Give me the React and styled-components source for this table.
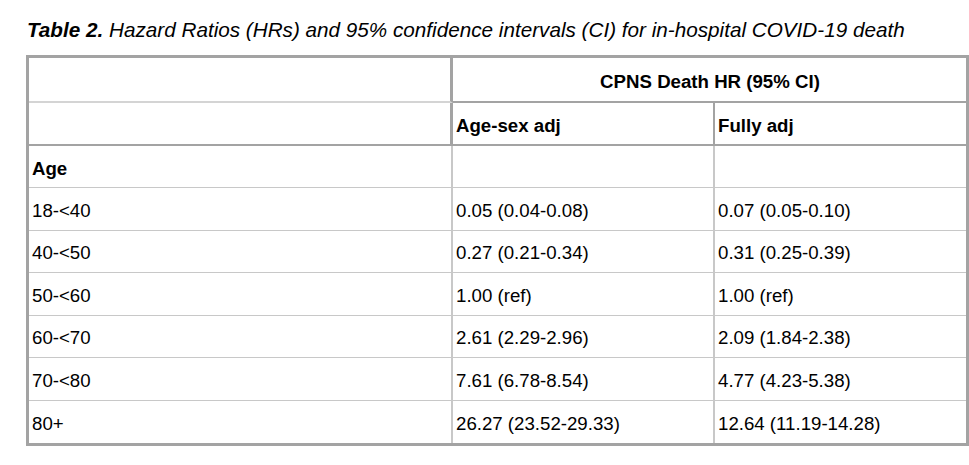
import React from 'react';
import styled, { createGlobalStyle } from 'styled-components';

const GlobalStyle = createGlobalStyle`
    html, body {
        margin: 0;
        padding: 0;
        background: #fff;
    }
    body {
        font-family: 'Liberation Sans', Arial, sans-serif;
        color: #000;
    }
`;

const rows = [
    ['18-<40', '0.05 (0.04-0.08)', '0.07 (0.05-0.10)'],
    ['40-<50', '0.27 (0.21-0.34)', '0.31 (0.25-0.39)'],
    ['50-<60', '1.00 (ref)', '1.00 (ref)'],
    ['60-<70', '2.61 (2.29-2.96)', '2.09 (1.84-2.38)'],
    ['70-<80', '7.61 (6.78-8.54)', '4.77 (4.23-5.38)'],
    ['80+', '26.27 (23.52-29.33)', '12.64 (11.19-14.28)'],
];

export default function App() {
    return (
        <Page>
            <GlobalStyle />
            <Caption>
                <b>Table 2.</b> Hazard Ratios (HRs) and 95% confidence intervals (CI) for in-hospital COVID-19 death
            </Caption>
            <Table>
                <colgroup>
                    <col style={{ width: 424 }} />
                    <col style={{ width: 262 }} />
                    <col style={{ width: 251 }} />
                </colgroup>
                <thead>
                    <tr>
                        <HeadCell $h={45} $right="3px solid #a3a3a3" $bottom="2px solid #d4d4d4" />
                        <HeadCell colSpan={2} $h={45} $center $bottom="2px solid #a3a3a3">
                            CPNS Death HR (95% CI)
                        </HeadCell>
                    </tr>
                    <tr>
                        <HeadCell $h={43} $right="3px solid #a3a3a3" $bottom="2px solid #a3a3a3" />
                        <HeadCell $h={43} $right="2px solid #a3a3a3" $bottom="2px solid #a3a3a3">
                            Age-sex adj
                        </HeadCell>
                        <HeadCell $h={43} $bottom="2px solid #a3a3a3">
                            Fully adj
                        </HeadCell>
                    </tr>
                </thead>
                <tbody>
                    <tr>
                        <BodyCell $h={42} $bold $right>Age</BodyCell>
                        <BodyCell $h={42} $right />
                        <BodyCell $h={42} />
                    </tr>
                    {rows.map((r, i) => (
                        <tr key={r[0]}>
                            <BodyCell $h={42.5} $right $last={i === rows.length - 1}>{r[0]}</BodyCell>
                            <BodyCell $h={42.5} $right $last={i === rows.length - 1}>{r[1]}</BodyCell>
                            <BodyCell $h={42.5} $last={i === rows.length - 1}>{r[2]}</BodyCell>
                        </tr>
                    ))}
                </tbody>
            </Table>
        </Page>
    );
}

const Page = styled.div`
    padding: 14px 0 16px 26px;
`;

const Caption = styled.div`
    font-style: italic;
    font-size: 20.7px;
    line-height: 32px;
    margin: 0 0 9px 1px;
    b {
        font-weight: bold;
    }
`;

const Table = styled.table`
    border-collapse: separate;
    border-spacing: 0;
    table-layout: fixed;
    width: 943px;
    border: 3px solid #a3a3a3;
    font-size: 18.67px;
`;

const HeadCell = styled.th`
    height: ${(p) => p.$h}px;
    box-sizing: border-box;
    padding: 4px 2px 0 3px;
    font-weight: bold;
    text-align: ${(p) => (p.$center ? 'center' : 'left')};
    vertical-align: middle;
    border-right: ${(p) => p.$right || 'none'};
    border-bottom: ${(p) => p.$bottom || 'none'};
`;

const BodyCell = styled.td`
    height: ${(p) => p.$h}px;
    box-sizing: border-box;
    padding: 4px 2px 0 3px;
    font-weight: ${(p) => (p.$bold ? 'bold' : 'normal')};
    vertical-align: middle;
    white-space: nowrap;
    border-right: ${(p) => (p.$right ? '2px solid #c8c8c8' : 'none')};
    border-bottom: ${(p) => (p.$last ? 'none' : '1px solid #c8c8c8')};
`;
